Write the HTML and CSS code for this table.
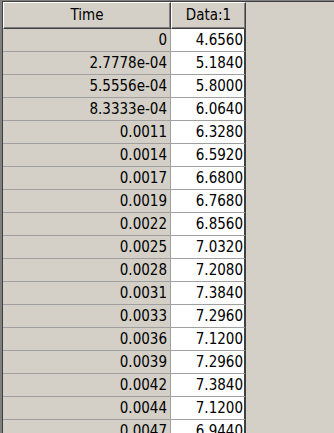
FILE: index.html
```html
<!DOCTYPE html>
<html>
<head>
<meta charset="utf-8">
<link rel="stylesheet" href="styles.css">
</head>
<body>
<div class="frame">
  <div class="inner">
    <div class="grid">
      <div class="hcell c-time">Time</div>
      <div class="hcell c-data">Data:1</div>

      <div class="tcell">0</div><div class="dcell">4.6560</div>
      <div class="tcell">2.7778e-04</div><div class="dcell">5.1840</div>
      <div class="tcell">5.5556e-04</div><div class="dcell">5.8000</div>
      <div class="tcell">8.3333e-04</div><div class="dcell">6.0640</div>
      <div class="tcell">0.0011</div><div class="dcell">6.3280</div>
      <div class="tcell">0.0014</div><div class="dcell">6.5920</div>
      <div class="tcell">0.0017</div><div class="dcell">6.6800</div>
      <div class="tcell">0.0019</div><div class="dcell">6.7680</div>
      <div class="tcell">0.0022</div><div class="dcell">6.8560</div>
      <div class="tcell">0.0025</div><div class="dcell">7.0320</div>
      <div class="tcell">0.0028</div><div class="dcell">7.2080</div>
      <div class="tcell">0.0031</div><div class="dcell">7.3840</div>
      <div class="tcell">0.0033</div><div class="dcell">7.2960</div>
      <div class="tcell">0.0036</div><div class="dcell">7.1200</div>
      <div class="tcell">0.0039</div><div class="dcell">7.2960</div>
      <div class="tcell">0.0042</div><div class="dcell">7.3840</div>
      <div class="tcell">0.0044</div><div class="dcell">7.1200</div>
      <div class="tcell">0.0047</div><div class="dcell">6.9440</div>
    </div>
  </div>
</div>
</body>
</html>
```
FILE: styles.css
```css
html, body {
  margin: 0;
  padding: 0;
  width: 334px;
  height: 433px;
  overflow: hidden;
  background: #d4d0c8;
  font-family: "DejaVu Sans Condensed", "DejaVu Sans", sans-serif;
  font-stretch: condensed;
  font-size: 15px;
  color: #000;
}
.frame {
  border-top: 1px solid #808080;
  border-left: 2px solid #808080;
  height: 100%;
  box-sizing: border-box;
}
.inner {
  border-top: 1px solid #404040;
  border-left: 1px solid #404040;
  height: 100%;
  box-sizing: border-box;
}
.grid {
  display: grid;
  grid-template-columns: 168px 75px;
  grid-auto-rows: 23px;
  grid-template-rows: 27px;
  width: 243px;
}
.hcell {
  box-sizing: border-box;
  background: #d4d0c8;
  border-top: 1px solid #ffffff;
  border-left: 1px solid #ffffff;
  border-right: 1px solid #404040;
  border-bottom: 1px solid #404040;
  box-shadow: inset -1px -1px 0 #808080;
  display: flex;
  align-items: center;
  justify-content: center;
  padding-bottom: 1px;
}
.tcell, .dcell {
  box-sizing: border-box;
  display: flex;
  align-items: center;
  justify-content: flex-end;
  border-bottom: 1px solid #a0a0a0;
  padding-bottom: 1px;
}
.tcell {
  background: #d4d0c8;
  border-right: 1px solid #a0a0a0;
  padding-right: 3px;
}
.dcell {
  background: #ffffff;
  border-right: 2px solid #404040;
  padding-right: 1px;
}
```
